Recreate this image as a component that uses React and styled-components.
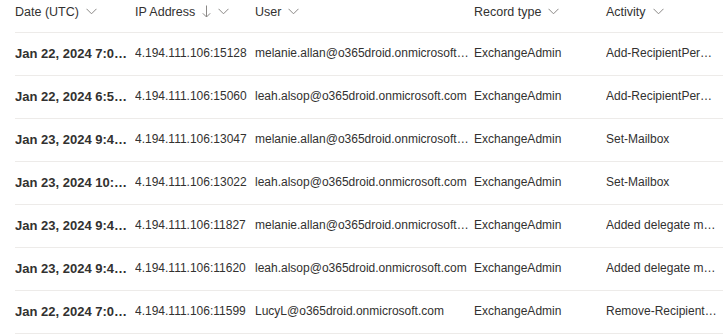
import React from "react";
import styled, { createGlobalStyle } from "styled-components";

const Global = createGlobalStyle`
  html, body { margin: 0; padding: 0; background: #fff; }
  body { font-family: "Liberation Sans", Arial, sans-serif; color: #323130; }
`;

const cols = "120px 120px 219px 132px 1fr";

const Table = styled.div`
  margin-left: 15px;
  width: 708px;
  overflow: hidden;
`;

const HeaderRow = styled.div`
  display: grid;
  grid-template-columns: ${cols};
  height: 33px;
  border-bottom: 1px solid #edebe9;
  box-sizing: border-box;
`;

const HeaderCell = styled.div`
  display: flex;
  align-items: center;
  gap: 7px;
  font-size: 12.5px;
  color: #323130;
  padding-bottom: 9px;
  white-space: nowrap;
`;

const Row = styled.div`
  display: grid;
  grid-template-columns: ${cols};
  height: 43px;
  align-items: center;
  border-bottom: 1px solid #edebe9;
  box-sizing: border-box;
`;

const Cell = styled.div`
  font-size: ${(p) => (p.$bold ? "13px" : "12px")};
  font-weight: ${(p) => (p.$bold ? 700 : 400)};
  color: #323130;
  white-space: nowrap;
  overflow: hidden;
  text-overflow: ellipsis;
  padding-right: ${(p) => (p.$bold ? "7px" : "5px")};
  padding-bottom: 2px;
`;

const Chevron = () => (
  <svg width="11" height="7" viewBox="0 0 11 7" fill="none">
    <path d="M0.5 0.8 L5.5 5.8 L10.5 0.8" stroke="#8a8886" strokeWidth="1" />
  </svg>
);

const DownArrow = () => (
  <svg width="9" height="13" viewBox="0 0 9 13" fill="none">
    <path d="M4.5 0.5 V12 M0.8 8.3 L4.5 12 L8.2 8.3" stroke="#8a8886" strokeWidth="1" />
  </svg>
);

const rows = [
  ["Jan 22, 2024 7:05:12 PM", "4.194.111.106:15128", "melanie.allan@o365droid.onmicrosoft.com", "ExchangeAdmin", "Add-RecipientPermission"],
  ["Jan 22, 2024 6:58:10 PM", "4.194.111.106:15060", "leah.alsop@o365droid.onmicrosoft.com", "ExchangeAdmin", "Add-RecipientPermission"],
  ["Jan 23, 2024 9:42:11 AM", "4.194.111.106:13047", "melanie.allan@o365droid.onmicrosoft.com", "ExchangeAdmin", "Set-Mailbox"],
  ["Jan 23, 2024 10:01:33 AM", "4.194.111.106:13022", "leah.alsop@o365droid.onmicrosoft.com", "ExchangeAdmin", "Set-Mailbox"],
  ["Jan 23, 2024 9:45:20 AM", "4.194.111.106:11827", "melanie.allan@o365droid.onmicrosoft.com", "ExchangeAdmin", "Added delegate mailbox permission"],
  ["Jan 23, 2024 9:44:02 AM", "4.194.111.106:11620", "leah.alsop@o365droid.onmicrosoft.com", "ExchangeAdmin", "Added delegate mailbox permission"],
  ["Jan 22, 2024 7:01:45 PM", "4.194.111.106:11599", "LucyL@o365droid.onmicrosoft.com", "ExchangeAdmin", "Remove-RecipientPermission"],
];

export default function App() {
  return (
    <>
      <Global />
      <Table>
        <HeaderRow>
          <HeaderCell>Date (UTC) <Chevron /></HeaderCell>
          <HeaderCell>IP Address <DownArrow /> <Chevron /></HeaderCell>
          <HeaderCell>User <Chevron /></HeaderCell>
          <HeaderCell>Record type <Chevron /></HeaderCell>
          <HeaderCell>Activity <Chevron /></HeaderCell>
        </HeaderRow>
        {rows.map((r, i) => (
          <Row key={i}>
            <Cell $bold>{r[0]}</Cell>
            <Cell>{r[1]}</Cell>
            <Cell>{r[2]}</Cell>
            <Cell>{r[3]}</Cell>
            <Cell>{r[4]}</Cell>
          </Row>
        ))}
      </Table>
    </>
  );
}
